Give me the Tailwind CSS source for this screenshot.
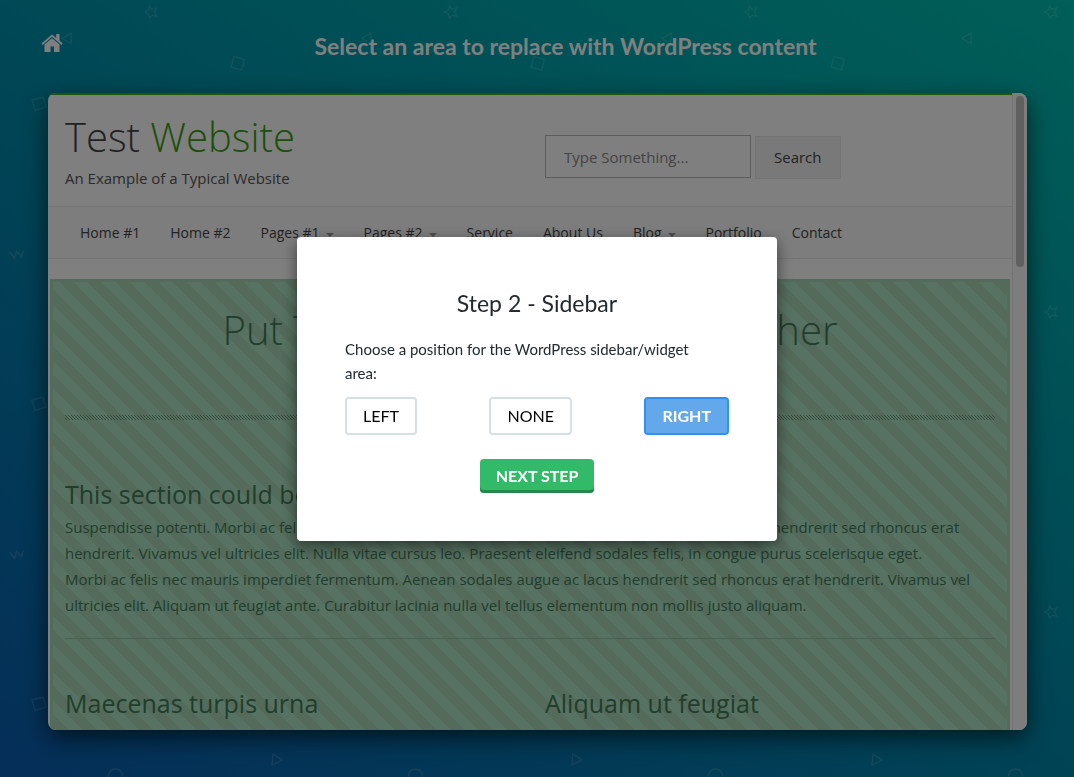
<!DOCTYPE html>
<html lang="en">
<head>
  <meta charset="utf-8" />
  <meta name="viewport" content="width=device-width, initial-scale=1" />
  <title>Select an area</title>
  <script src="https://cdn.jsdelivr.net/npm/@tailwindcss/browser@4"></script>
</head>
<body class="font-['Lato',sans-serif]">
  <div class="relative h-screen flex flex-col pl-12 pr-[47px] pb-[47px] bg-[linear-gradient(30deg,#0a5cb0,#008caa,#00beb0)] overflow-hidden">
    <!-- Background doodles, 300px tile -->
    <svg class="absolute inset-0 w-full h-full" aria-hidden="true">
      <defs>
        <pattern id="doodles" width="300" height="300" patternUnits="userSpaceOnUse">
          <g fill="none" stroke="#fff" stroke-opacity="0.15" stroke-width="1.3">
            <path d="M149.500 6L152 9.500L156.500 8L154.500 12L156.500 16L152.300 15.200L149.500 18L148.500 14L144.500 12L148.500 10Z" />
            <path d="M71 33L62 38.500L71 43.500Z" />
            <path d="M234 56.500L244.500 59.500L241.500 70L231 67Z" />
            <path d="M32 100L43 97L46 107L35 110.500Z" />
            <path d="M9.500 252L14.500 258.500L16.500 251.500L21.500 256.500L23.500 250.500" />
            <path d="M273 154L282 160L272 165Z" />
            <circle cx="115.500" cy="176" r="7" />
          </g>
        </pattern>
      </defs>
      <rect width="100%" height="100%" fill="url(#doodles)" />
    </svg>

    <header class="relative h-[93px] shrink-0 flex items-center justify-center pl-14">
      <a href="#" aria-label="Home" class="absolute -left-2 top-8 text-white">
        <svg class="w-6 h-[22px]" viewBox="0 0 24 22" fill="currentColor" aria-hidden="true">
          <path d="M1.500 11.500L12 2.500L16.200 6V2H19.500V8.800L22.700 11.500L21.500 13L12 4.800L2.700 13Z" />
          <path d="M4.500 12.600L12 6.200L19.500 12.600V20H14V14.500H10.500V20H4.500Z" />
        </svg>
      </a>
      <h1 class="text-[23px] font-bold text-white">Select an area to replace with WordPress content</h1>
    </header>

    <!-- Previewed site -->
    <main class="relative flex-1 min-h-0 flex rounded-lg overflow-hidden bg-white shadow-[0_8px_24px_rgba(0,0,0,0.6)] font-['Open_Sans',sans-serif] text-[15px] text-[#555]">
      <div class="flex-1 min-w-0 border-t-2 border-[#3fae0c]">
        <div class="grid grid-cols-2 gap-[30px] px-[17px] h-[111px]">
          <div class="pt-4">
            <div class="text-[40px] leading-[52px] font-light text-[#444]">Test <span class="text-[#37a012]">Website</span></div>
            <div class="leading-[30px]">An Example of a Typical Website</div>
          </div>
          <form class="flex items-start gap-1 pt-10">
            <input type="text" aria-label="Search text" placeholder="Type Something..." class="w-[206px] h-[43px] px-[18px] border border-[#bbb] bg-white placeholder:text-[#888]" />
            <button type="button" class="mt-px h-[43px] px-[18px] border border-[#e6e6e6] bg-[#f3f3f3] text-[#444]">Search</button>
          </form>
        </div>
        <nav class="flex items-center gap-[30px] h-[53px] px-8 border-y border-[#eaeaea] bg-[#fafafa] text-sm text-[#444]">
          <a href="#">Home #1</a>
          <a href="#">Home #2</a>
          <a href="#" class="flex items-center gap-1.5">Pages #1 <span class="mt-1 border-x-4 border-t-4 border-x-transparent border-t-[#999]"></span></a>
          <a href="#" class="flex items-center gap-1.5">Pages #2 <span class="mt-1 border-x-4 border-t-4 border-x-transparent border-t-[#999]"></span></a>
          <a href="#">Service</a>
          <a href="#">About Us</a>
          <a href="#" class="flex items-center gap-1.5">Blog <span class="mt-1 border-x-4 border-t-4 border-x-transparent border-t-[#999]"></span></a>
          <a href="#">Portfolio</a>
          <a href="#">Contact</a>
        </nav>
        <section class="mt-5 mx-[2px] px-3 h-[622px] border-[3px] border-[#a8d6b8] bg-[repeating-linear-gradient(45deg,#a8d6b8_0px,#a8d6b8_10px,#aee4c4_10px,#aee4c4_20px)] text-[#427a58]">
          <h2 class="pt-[18px] text-[40px] leading-[60px] font-light text-center whitespace-nowrap">Put Those Different Sites Together</h2>
          <svg class="block mt-[55px] w-full h-[5px]" aria-hidden="true">
            <defs>
              <pattern id="hatch" width="3" height="3" patternUnits="userSpaceOnUse">
                <path d="M0 0h1v1h-1zM1 1h1v1h-1zM2 2h1v1h-1z" fill="#6f9f80" shape-rendering="crispEdges" />
              </pattern>
            </defs>
            <rect width="100%" height="5" fill="url(#hatch)" />
          </svg>
          <h3 class="mt-[54px] text-[25px] leading-10">This section could be replaced</h3>
          <p class="leading-[26px]">Suspendisse potenti. Morbi ac felis nec mauris imperdiet fermentum. Aenean sodales augue ac lacus hendrerit sed rhoncus erat hendrerit. Vivamus vel ultricies elit. Nulla vitae cursus leo. Praesent eleifend sodales felis, in congue purus scelerisque eget.</p>
          <p class="leading-[26px]">Morbi ac felis nec mauris imperdiet fermentum. Aenean sodales augue ac lacus hendrerit sed rhoncus erat hendrerit. Vivamus vel ultricies elit. Aliquam ut feugiat ante. Curabitur lacinia nulla vel tellus elementum non mollis justo aliquam.</p>
          <hr class="mt-5 border-[#92c2a4]" />
          <div class="grid grid-cols-2 gap-[30px] mt-11 text-[25px] leading-10">
            <h3>Maecenas turpis urna</h3>
            <h3>Aliquam ut feugiat</h3>
          </div>
        </section>
      </div>
      <div class="w-[15px] flex justify-center pt-[3px] border-l border-[#e4e4e4] bg-[#fafafa]">
        <div class="w-2 h-[171px] rounded-full bg-[#c1c1c1]"></div>
      </div>
    </main>
  </div>

  <div class="fixed inset-0 flex items-center justify-center bg-black/50">
    <div role="dialog" aria-modal="true" aria-labelledby="step-title" class="w-[480px] p-12 rounded bg-white text-[#22292f] shadow-[0_5px_15px_rgba(0,0,0,0.5)]">
      <h2 id="step-title" class="text-[23px] leading-9 text-center">Step 2 - Sidebar</h2>
      <p class="mt-4 pr-8 text-[15px] leading-6">Choose a position for the WordPress sidebar/widget area:</p>
      <div class="mt-3 flex justify-between text-base text-black">
        <button type="button" class="h-[38px] px-4 rounded border-2 border-[#d5dfe6]">LEFT</button>
        <button type="button" class="h-[38px] px-4 rounded border-2 border-[#d5dfe6]">NONE</button>
        <button type="button" class="h-[38px] px-4 rounded border-2 border-[#3490ee] bg-[#62a8ea] text-white font-bold">RIGHT</button>
      </div>
      <div class="mt-6 flex justify-center">
        <button type="button" class="h-[34px] px-4 rounded bg-[#32ba68] text-white font-bold shadow-[inset_0_-3px_0_#248a4c]">NEXT STEP</button>
      </div>
    </div>
  </div>
</body>
</html>
